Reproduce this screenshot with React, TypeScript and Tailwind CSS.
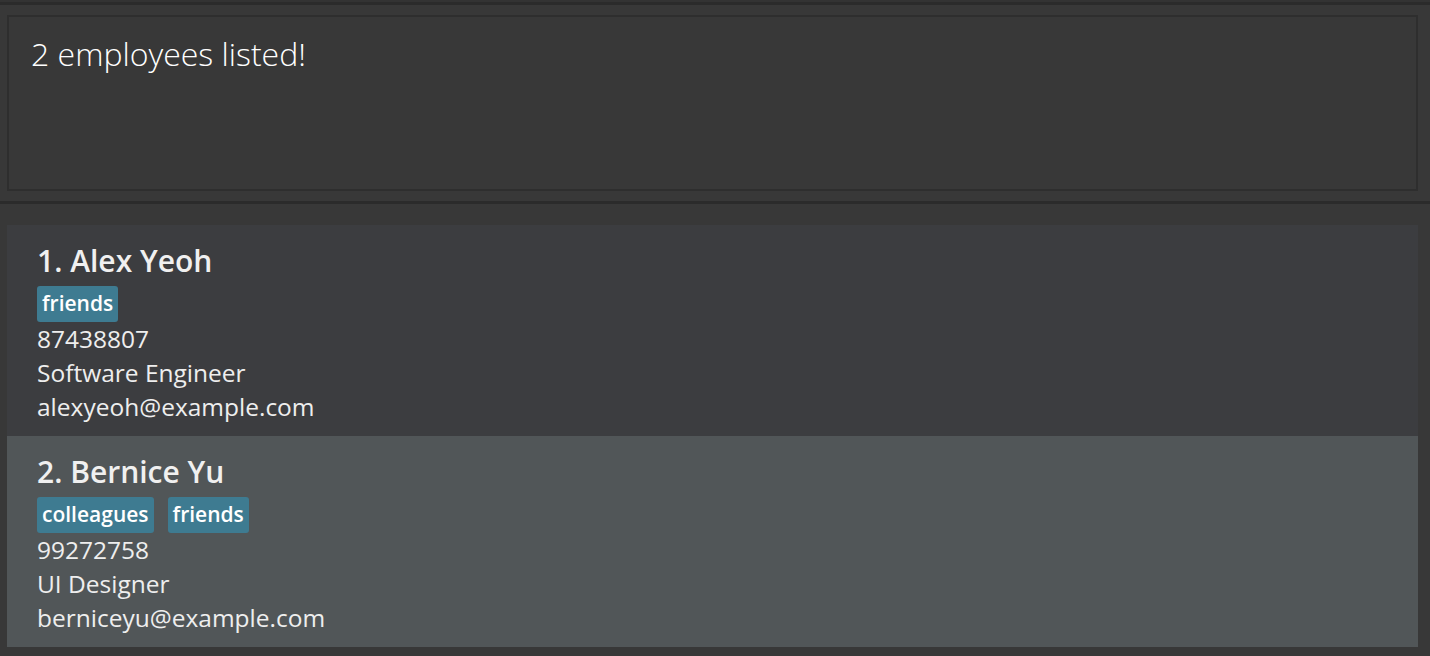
const employees = [
  {
    name: "Alex Yeoh",
    tags: ["friends"],
    phone: "87438807",
    role: "Software Engineer",
    email: "alexyeoh@example.com",
  },
  {
    name: "Bernice Yu",
    tags: ["colleagues", "friends"],
    phone: "99272758",
    role: "UI Designer",
    email: "berniceyu@example.com",
  },
];

function EmployeeCard({ index, person, selected }: { index: number; person: (typeof employees)[number]; selected: boolean }) {
  return (
    <div className={`h-[211px] pl-[30px] pt-[16px] ${selected ? "bg-[#515658]" : "bg-[#3c3d40]"}`}>
      <div className="h-[40px] text-[30px] font-semibold leading-[40px] text-[#f0f0f0]">
        {index}. {person.name}
      </div>
      <div className="mt-[5px] flex h-[36px] gap-[14px]">
        {person.tags.map((tag) => (
          <span
            key={tag}
            className="flex h-[36px] items-center rounded-[3px] bg-[#3e7b91] px-[5px] text-[21px] font-semibold text-white"
          >
            {tag}
          </span>
        ))}
      </div>
      <div className="text-[24.5px] leading-[34px] text-[#eeeeee]">
        <div>{person.phone}</div>
        <div>{person.role}</div>
        <div>{person.email}</div>
      </div>
    </div>
  );
}

export default function App() {
  return (
    <div className="flex h-[656px] w-[1430px] flex-col bg-[#383838] font-['Open_Sans',sans-serif]">
      <div className="h-[2px] bg-[#333333]" />
      <div className="h-[3px] bg-[#2b2b2b]" />
      <div className="px-[7px] pt-[10px]">
        <div className="h-[176px] w-[1411px] border-2 border-[#2e2e2e] bg-[#383838] px-[22px] pt-[17px]">
          <p className="text-[32px] font-light leading-[40px] text-white">2 employees listed!</p>
        </div>
      </div>
      <div className="mt-[10px] h-[3px] bg-[#2b2b2b]" />
      <div className="flex-1 pl-[7px] pt-[21px]">
        <div className="w-[1411px]">
          {employees.map((person, i) => (
            <EmployeeCard key={person.email} index={i + 1} person={person} selected={i === 1} />
          ))}
        </div>
      </div>
    </div>
  );
}
